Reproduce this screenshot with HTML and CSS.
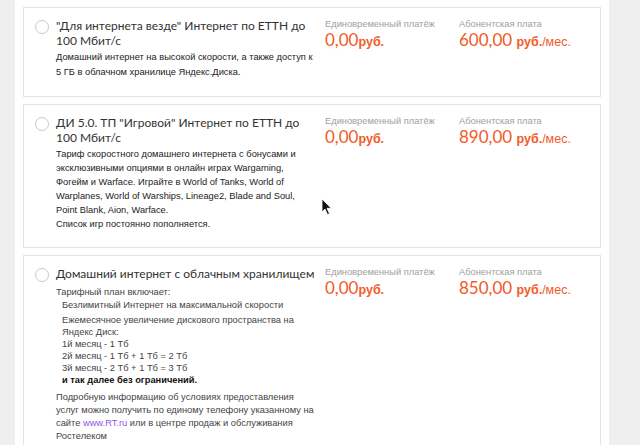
FILE: index.html
```html
<!DOCTYPE html>
<html lang="ru">
<head>
<meta charset="utf-8">
<title>Тарифы</title>
<link rel="stylesheet" href="styles.css">
</head>
<body>
<div class="page">
  <div class="card">
    <div class="info">
      <span class="radio"></span>
      <div class="text">
        <div class="title">"Для интернета везде" Интернет по ЕТТН до 100 Мбит/с</div>
        <div class="desc desc-loose">Домашний интернет на высокой скорости, а также доступ к 5 ГБ в облачном хранилице Яндекс.Диска.</div>
      </div>
    </div>
    <div class="price">
      <div class="label">Единовременный платёж</div>
      <div class="sum">0,00<b>руб.</b></div>
    </div>
    <div class="price">
      <div class="label">Абонентская плата</div>
      <div class="sum">600,00 <b>руб.</b><span class="per">/мес.</span></div>
    </div>
  </div>

  <div class="card">
    <div class="info">
      <span class="radio"></span>
      <div class="text">
        <div class="title">ДИ 5.0. ТП "Игровой" Интернет по ЕТТН до 100 Мбит/с</div>
        <div class="desc">Тариф скоростного домашнего интернета с бонусами и эксклюзивными опциями в онлайн играх Wargaming, Фогейм и Warface. Играйте в World of Tanks, World of Warplanes, World of Warships, Lineage2, Blade and Soul, Point Blank, Aion, Warface.<br>Список игр постоянно пополняется.</div>
      </div>
    </div>
    <div class="price">
      <div class="label">Единовременный платёж</div>
      <div class="sum">0,00<b>руб.</b></div>
    </div>
    <div class="price">
      <div class="label">Абонентская плата</div>
      <div class="sum">890,00 <b>руб.</b><span class="per">/мес.</span></div>
    </div>
  </div>

  <div class="card">
    <div class="info">
      <span class="radio"></span>
      <div class="text">
        <div class="title">Домашний интернет с облачным хранилищем</div>
        <div class="desc2">
          <div>Тарифный план включает:</div>
          <ul class="list">
            <li>Безлимитный Интернет на максимальной скорости</li>
            <li>Ежемесячное увеличение дискового пространства на Яндекс Диск:<br>1й месяц - 1 Тб<br>2й месяц - 1 Тб + 1 Тб = 2 Тб<br>3й месяц - 2 Тб + 1 Тб = 3 Тб<br><b>и так далее без ограничений.</b></li>
          </ul>
          <p class="more">Подробную информацию об условиях предоставления услуг можно получить по единому телефону указанному на сайте <a href="#">www.RT.ru</a> или в центре продаж и обслуживания Ростелеком</p>
        </div>
      </div>
    </div>
    <div class="price">
      <div class="label">Единовременный платёж</div>
      <div class="sum">0,00<b>руб.</b></div>
    </div>
    <div class="price">
      <div class="label">Абонентская плата</div>
      <div class="sum">850,00 <b>руб.</b><span class="per">/мес.</span></div>
    </div>
  </div>
</div>
<svg class="cursor" width="12" height="18" viewBox="0 0 12 18"><path d="M1 1 L1 14 L4 11 L6.5 16.5 L8.5 15.6 L6 10.3 L10.2 10.3 Z" fill="#111" stroke="#fff" stroke-width="0.8"/></svg>
</body>
</html>
```

FILE: styles.css
```css
html, body {
  margin: 0;
  padding: 0;
}
body {
  background: #efefef;
  width: 640px;
  height: 445px;
  overflow: hidden;
  position: relative;
  font-family: "Liberation Sans", Arial, sans-serif;
  color: #222;
}
.page {
  margin: 0 31px 0 15px;
  background: #fff;
  padding: 7px 8px 8px;
  min-height: 445px;
  box-sizing: border-box;
}
.card {
  border: 1px solid #e4e4e4;
  display: grid;
  grid-template-columns: 283px 134px 1fr;
  padding: 10px 0 16px 11px;
  margin-bottom: 7px;
}
.info {
  display: flex;
  gap: 7px;
  align-items: flex-start;
}
.radio {
  flex: none;
  width: 14px;
  height: 14px;
  box-sizing: border-box;
  border: 1px solid #c9c9c9;
  border-radius: 50%;
  margin-top: 2px;
}
.text {
  width: 263px;
}
.title {
  font-family: Lato, "Liberation Sans", sans-serif;
  font-size: 12px;
  line-height: 15px;
  color: #333;
  margin-bottom: 2px;
}
.desc {
  font-size: 9.3px;
  line-height: 14px;
  color: #222;
}
.desc-loose {
  line-height: 15px;
}
.desc2 {
  font-size: 9.3px;
  line-height: 12px;
  color: #444;
  margin-top: 5px;
}
.list {
  list-style: none;
  margin: 0;
  padding: 0 0 0 6px;
}
.list li {
  margin: 1px 0 3px;
}
.list b {
  color: #111;
}
.more {
  margin: 0;
  padding-top: 2px;
  line-height: 13px;
}
.more a {
  color: #8a56e8;
  text-decoration: none;
}
.price {
  padding-left: 7px;
}
.label {
  font-size: 9.3px;
  line-height: 12px;
  color: #a0a0a0;
}
.sum {
  font-family: Lato, "Liberation Sans", sans-serif;
  font-size: 17px;
  line-height: 20px;
  color: #f25a27;
}
.sum b {
  font-family: "Liberation Sans", Arial, sans-serif;
  font-size: 12.5px;
  font-weight: 700;
}
.per {
  font-family: "Liberation Sans", Arial, sans-serif;
  font-size: 12.5px;
}
.cursor {
  position: absolute;
  left: 321px;
  top: 198px;
}
```
